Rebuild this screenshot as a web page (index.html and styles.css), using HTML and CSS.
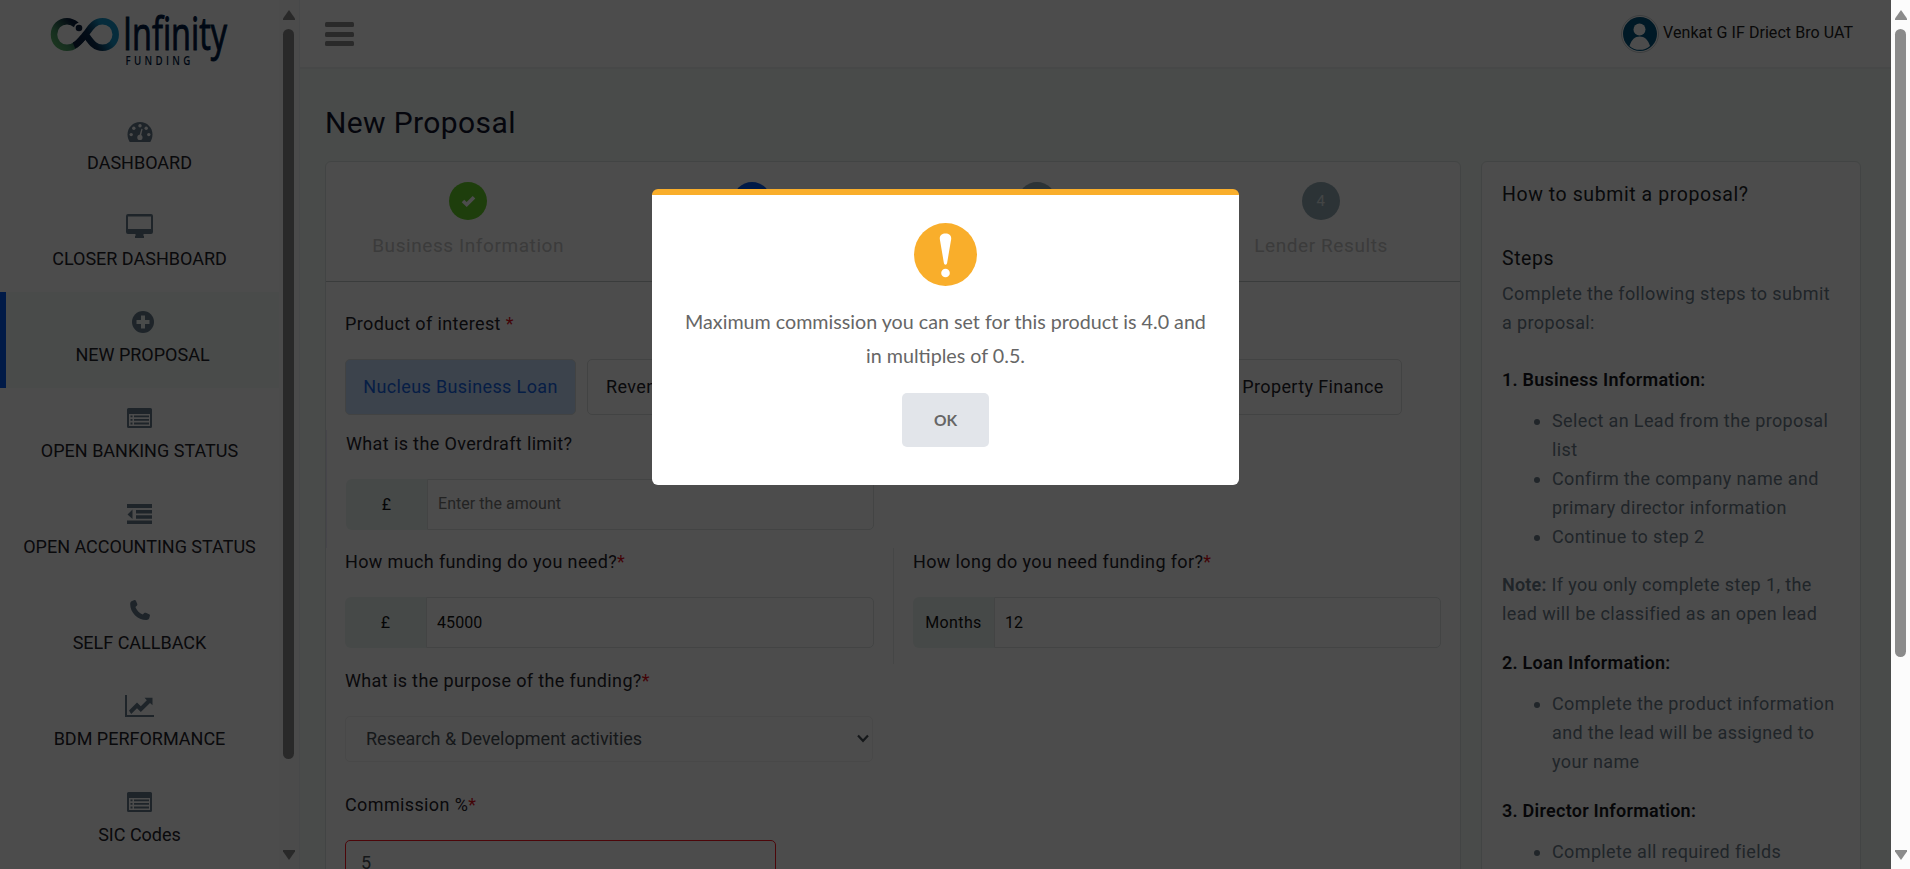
FILE: index.html
```html
<!DOCTYPE html>
<html lang="en">
<head>
<meta charset="utf-8">
<title>New Proposal</title>
<link rel="stylesheet" href="styles.css">
</head>
<body>
<div class="app">
  <aside class="sidebar">
    <div class="sidebar-body">
      <svg class="logo" width="200" height="68" viewBox="0 0 200 68">
        <defs>
          <linearGradient id="lg" gradientUnits="userSpaceOnUse" x1="52" y1="46" x2="78" y2="24"><stop offset="0" stop-color="#5fb96b"/><stop offset=".35" stop-color="#4a9a68"/><stop offset=".9" stop-color="#0b1f3f"/></linearGradient>
          <linearGradient id="lb" gradientUnits="userSpaceOnUse" x1="82" y1="46" x2="112" y2="28"><stop offset="0" stop-color="#0b1f3f"/><stop offset=".35" stop-color="#0d2d50"/><stop offset=".8" stop-color="#1595c8"/></linearGradient>
        </defs>
        <path d="M76.500 25C73.500 22.500 70.500 21.200 67 21.200C59.500 21.200 54 27 54 34.500S59.500 47.800 67 47.800C74 47.800 78 43.500 83 37.500" fill="none" stroke="url(#lg)" stroke-width="6.500"/>
        <path d="M74 45.500C79 43.500 82 38.500 87 32.500C91.500 26 95 21.200 102.500 21.200C110 21.200 115.700 27 115.700 34.500S110 47.800 102.500 47.800C95.500 47.800 92 43.500 87 36.500" fill="none" stroke="url(#lb)" stroke-width="6.500"/>
        <circle cx="79" cy="28" r="5" fill="#fff"/>
        <circle cx="79" cy="28" r="3.300" fill="#0b1f3f"/>
        <text class="logo-name" x="123" y="49.500" textLength="104" lengthAdjust="spacingAndGlyphs">Infinity</text>
        <text class="logo-sub" transform="translate(125.500 64.500) scale(.78 1)" x="0" y="0" textLength="83" lengthAdjust="spacing">FUNDING</text>
      </svg>
      <nav class="menu">
        <a class="item"><svg class="ic gauge" width="26" height="20" viewBox="0 0 26 20"><path d="M13 0C6 0 .5 5.500.5 12.500c0 2.800.9 5.200 2.200 7.500h20.600c1.300-2.300 2.200-4.700 2.200-7.500C25.500 5.500 20 0 13 0z"/><g fill="#fff"><circle cx="13" cy="3.700" r="1.700"/><circle cx="6.800" cy="6.300" r="1.700"/><circle cx="19.200" cy="6.300" r="1.700"/><circle cx="4.200" cy="12.600" r="1.700"/><circle cx="21.800" cy="12.600" r="1.700"/><circle cx="12.900" cy="15.400" r="2.600"/><path d="M12.300 14 14.400 6.800 15.600 7.100 13.900 14.300z"/></g></svg><span>DASHBOARD</span></a>
        <a class="item"><svg class="ic" width="27" height="24" viewBox="0 0 27 24"><path fill-rule="evenodd" d="M2 0h23a2 2 0 0 1 2 2v16a2 2 0 0 1-2 2h-7.500v2H18v2H9v-2h.5v-2H2a2 2 0 0 1-2-2V2a2 2 0 0 1 2-2zM2 2.500V15h23V2.500z"/></svg><span>CLOSER DASHBOARD</span></a>
        <a class="item active"><svg class="ic" width="22" height="22" viewBox="0 0 22 22"><circle cx="11" cy="11" r="11"/><path fill="#f4faf7" d="M9 4.500h4V9h4.500v4H13v4.500H9V13H4.500V9H9z"/></svg><span>NEW PROPOSAL</span></a>
        <a class="item"><svg class="ic" width="25" height="20" viewBox="0 0 25 20"><path fill-rule="evenodd" d="M1.500 0h22A1.500 1.500 0 0 1 25 1.500v17a1.500 1.500 0 0 1-1.500 1.500h-22A1.500 1.500 0 0 1 0 18.500v-17A1.500 1.500 0 0 1 1.500 0zM2 6v12h21V6z"/><path d="M3.500 7.500h2v1.800h-2zM7 7.500h15v1.800H7zM3.500 11h2v1.800h-2zM7 11h15v1.800H7zM3.500 14.600h2v1.800h-2zM7 14.600h15v1.800H7z"/></svg><span>OPEN BANKING STATUS</span></a>
        <a class="item"><svg class="ic" width="25" height="20" viewBox="0 0 25 20"><path d="M0 0h25v4H0zM9 6h16v3.500H9zM9 11.300h16v3.500H9zM0 16.500h25V20H0zM.5 10.400 5.500 5.600v9.500z"/></svg><span>OPEN ACCOUNTING STATUS</span></a>
        <a class="item"><svg class="ic" width="20" height="20" viewBox="0 0 20 20"><path d="M2 1 4.500 0C5.300-.1 5.700.3 6 1L7.300 4c.2.700 0 1.200-.5 1.700L5.400 7c1.200 3.300 3.800 6 7.400 7.500l1.400-1.400c.5-.5 1-.6 1.700-.3l3.200 1.400c.7.300 1 .8.800 1.500l-.6 2.300c-.3 1.200-1.400 2-2.900 2C7.500 19.800.2 12.500.2 4.200.1 2.700.7 1.500 2 1z"/></svg><span>SELF CALLBACK</span></a>
        <a class="item"><svg class="ic" width="29" height="22" viewBox="0 0 29 22"><path d="M0 0h2v20h27v2H0zM4 15.500 12 7.500l3.800 3.800 6-6-2.300-2.500H27.500v7.400l-2.500-2.300-9.200 9.200L12 13.300 6.200 19z"/></svg><span>BDM PERFORMANCE</span></a>
        <a class="item"><svg class="ic" width="25" height="20" viewBox="0 0 25 20"><path fill-rule="evenodd" d="M1.500 0h22A1.500 1.500 0 0 1 25 1.500v17a1.500 1.500 0 0 1-1.500 1.500h-22A1.500 1.500 0 0 1 0 18.500v-17A1.500 1.500 0 0 1 1.500 0zM2 6v12h21V6z"/><path d="M3.500 7.500h2v1.800h-2zM7 7.500h15v1.800H7zM3.500 11h2v1.800h-2zM7 11h15v1.800H7zM3.500 14.600h2v1.800h-2zM7 14.600h15v1.800H7z"/></svg><span>SIC Codes</span></a>
      </nav>
    </div>
    <div class="scroll side-scroll">
      <svg class="arrow" width="12" height="10" viewBox="0 0 12 10"><path d="M6 0 12 8.500V10H0V8.500z"/></svg>
      <div class="thumb side-thumb"></div>
      <svg class="arrow last" width="12" height="10" viewBox="0 0 12 10"><path d="M6 10 12 1.500V0H0V1.500z"/></svg>
    </div>
  </aside>

  <div class="page">
    <header class="topbar">
      <div class="burger"><i></i><i></i><i></i></div>
      <div class="user">
        <svg width="38" height="38" viewBox="0 0 38 38"><circle cx="19" cy="19" r="18.500" fill="#fff" stroke="#c9cfd2"/><circle cx="19" cy="19" r="17" fill="#00557f"/><circle cx="18.500" cy="14.500" r="6" fill="#fff"/><path d="M8.500 31C10.500 24.500 14 21.500 18.700 21.500S27 24.500 29 31C26 34 22.500 34.800 18.700 34.800S11.500 34 8.500 31z" fill="#fff"/></svg>
        <span>Venkat G IF Driect Bro UAT</span>
      </div>
    </header>
    <h1 class="title">New Proposal</h1>
    <div class="columns">
      <section class="card main-card">
        <div class="steps">
          <div class="step"><b class="dot done"><svg width="15" height="12" viewBox="0 0 15 12"><path d="M2 6 5.700 9.500 13 2.200" fill="none" stroke="#fff" stroke-width="3.600"/></svg></b><span>Business Information</span></div>
          <div class="step"><b class="dot now">2</b><span>Loan Information</span></div>
          <div class="step"><b class="dot">3</b><span>Director Information</span></div>
          <div class="step"><b class="dot">4</b><span>Lender Results</span></div>
        </div>
        <div class="form">
          <div class="field f-product">
            <label>Product of interest <em>*</em></label>
            <div class="products">
              <button class="prod on">Nucleus Business Loan</button>
              <button class="prod revenue">Revenue Based Loan</button>
              <button class="prod property">Property Finance</button>
            </div>
          </div>
          <div class="field f-overdraft">
            <label>What is the Overdraft limit?</label>
            <div class="group"><span class="addon">£</span><span class="input hint">Enter the amount</span></div>
          </div>
          <div class="pair">
            <div class="field">
              <label>How much funding do you need?<em>*</em></label>
              <div class="group"><span class="addon">£</span><span class="input">45000</span></div>
            </div>
            <div class="field right">
              <label>How long do you need funding for?<em>*</em></label>
              <div class="group"><span class="addon">Months</span><span class="input">12</span></div>
            </div>
          </div>
          <div class="field f-purpose">
            <label>What is the purpose of the funding?<em>*</em></label>
            <div class="select"><span>Research &amp; Development activities</span><svg width="12" height="9" viewBox="0 0 12 9"><path d="M1 1.500 6 6.800 11 1.500" fill="none" stroke="#495057" stroke-width="2.200"/></svg></div>
          </div>
          <div class="field">
            <label>Commission %<em>*</em></label>
            <div class="commission">5</div>
          </div>
        </div>
      </section>
      <section class="card help">
        <h2>How to submit a proposal?</h2>
        <h2 class="sub">Steps</h2>
        <p>Complete the following steps to submit a proposal:</p>
        <h3>1. Business Information:</h3>
        <ul><li>Select an Lead from the proposal list</li><li>Confirm the company name and primary director information</li><li>Continue to step 2</li></ul>
        <p class="note"><strong>Note:</strong> If you only complete step 1, the lead will be classified as an open lead</p>
        <h3>2. Loan Information:</h3>
        <ul><li>Complete the product information and the lead will be assigned to your name</li></ul>
        <h3>3. Director Information:</h3>
        <ul><li>Complete all required fields</li></ul>
      </section>
    </div>
  </div>

  <div class="scroll window-scroll">
    <svg class="arrow" width="12" height="10" viewBox="0 0 12 10"><path d="M6 0 12 8.500V10H0V8.500z"/></svg>
    <div class="thumb window-thumb"></div>
    <svg class="arrow last" width="12" height="10" viewBox="0 0 12 10"><path d="M6 10 12 1.500V0H0V1.500z"/></svg>
  </div>
</div>

<div class="overlay">
  <div class="modal">
    <svg width="63" height="63" viewBox="0 0 63 63"><circle cx="31.500" cy="31.500" r="31.500" fill="#f9ae2b"/><path fill="#fff" d="M31.500 10.500c3.600 0 6 1.800 5.700 5.500L33.200 39.500c-.4 3-3 3-3.400 0L25.800 16c-.3-3.700 2.100-5.500 5.700-5.500z"/><circle cx="31.500" cy="50" r="4.300" fill="#fff"/></svg>
    <p>Maximum commission you can set for this product is 4.0 and in multiples of 0.5.</p>
    <button class="ok">OK</button>
  </div>
</div>
</body>
</html>
```
FILE: styles.css
```css
* { box-sizing: border-box; }
body { margin: 0; height: 869px; overflow: hidden; font-family: Roboto, "Liberation Sans", sans-serif; color: #1f2229; background: #f4faf7; }
h1, h2, h3, p, ul { margin: 0; padding: 0; font-weight: 400; }
button { font: inherit; letter-spacing: inherit; color: inherit; }
em { font-style: normal; color: #e0101c; }

.app { display: flex; height: 869px; }

/* Sidebar */
.sidebar { display: flex; width: 300px; flex: none; background: #fff; border-right: 1px solid #eef1f3; overflow: hidden; }
.sidebar-body { width: 279px; }
.logo { display: block; overflow: visible; }
.logo-name { font: 500 45px "Open Sans", sans-serif; fill: #001b44; stroke: #001b44; stroke-width: 1; font-variant-ligatures: none; }
.logo-sub { font: 600 12.500px "Open Sans", sans-serif; fill: #001b44; }
.menu { padding-top: 32px; }
.item { display: flex; flex-direction: column; align-items: center; height: 96px; padding-top: 20px; font-size: 18px; line-height: 26px; white-space: nowrap; }
.item.active { border-left: 6px solid #0058ee; background: #f4faf7; }
.item .ic { display: block; height: 24px; margin: -2px 0 8px; flex: none; overflow: visible; fill: #64798a; }
.item .gauge { margin: 0 0 6px; }

/* Scrollbars */
.scroll { display: flex; flex-direction: column; align-items: center; width: 20px; flex: none; height: 869px; padding: 10px 0 9px; background: #fafafa; }
.arrow { flex: none; fill: #8b8b8b; }
.arrow.last { margin-top: auto; }
.thumb { width: 11px; margin-top: 9px; border-radius: 6px; background: #8b8b8b; }
.side-scroll { padding-right: 1px; }
.side-thumb { height: 730px; }
.window-thumb { height: 628px; }
.window-scroll { width: 19px; background: #fcfcfc; }

/* Page */
.page { flex: 1; min-width: 0; overflow: hidden; }
.topbar { display: flex; justify-content: space-between; align-items: flex-start; height: 69px; padding: 15px 38px 0 25px; background: #fff; border-bottom: 2px solid #edf1f1; }
.burger { display: flex; flex-direction: column; gap: 4.500px; padding-top: 7px; }
.burger i { width: 29px; height: 5px; border-radius: 1.500px; background: #8c8c8c; }
.user { display: flex; gap: 4px; font-size: 16px; line-height: 35px; letter-spacing: .05px; color: #222; }
.title { margin: 33px 0 0 25px; height: 59px; font-size: 30px; line-height: 42px; letter-spacing: .38px; color: #11142d; }
.columns { display: flex; gap: 20px; padding-left: 25px; }
.card { height: 760px; background: #fff; border: 1px solid #dde4e3; border-radius: 6px; }
.main-card { width: 1136px; flex: none; }
.help { width: 380px; padding: 18px 20px 0 20px; font-size: 18px; line-height: 29px; letter-spacing: .37px; color: #6d7c8a; }

/* Steps */
.steps { display: flex; height: 120px; border-bottom: 1px solid #c4c8c8; }
.step { display: flex; flex: none; width: 284.300px; flex-direction: column; align-items: center; padding-top: 20px; gap: 12px; font-size: 19px; line-height: 28px; letter-spacing: .58px; color: #c6c6c6; }
.dot { display: flex; align-items: center; justify-content: center; width: 38px; height: 38px; border-radius: 50%; background: #95abb4; color: #dfe6e8; font-size: 15px; font-weight: 400; }
.dot.done { background: #67cf2b; }
.dot.now { background: #0058ee; color: #fff; }

/* Form */
.form { padding-top: 28px; font-size: 18px; letter-spacing: .37px; }
.field { padding: 0 19px; }
.field label { display: block; height: 49px; padding-top: 1px; line-height: 26px; }
.f-product { height: 120px; }
.products { display: flex; }
.prod { height: 56px; border: 1px solid #dce0e0; border-radius: 5px; background: #fff; padding: 0 0 2px; white-space: nowrap; }
.prod.on { width: 231px; background: #c8e0ff; color: #1765e8; }
.prod.revenue { width: 240px; margin-left: 11px; padding-left: 18px; text-align: left; }
.prod.property { width: 178px; margin-left: auto; margin-right: 39px; }
.f-overdraft { width: 567px; height: 118px; border-left: 1px solid #e9e8f7; }
.pair { display: flex; height: 119px; }
.pair .field { width: 567px; height: 116px; }
.pair .right { border-left: 1px solid #e6e9e9; }
.group { display: flex; height: 51px; font-size: 16px; }
.addon { display: flex; align-items: center; justify-content: center; width: 81px; flex: none; border-radius: 6px 0 0 6px; background: #ecf3f1; color: #111; }
.input { display: flex; align-items: center; flex: 1; padding-left: 10px; border: 1px solid #dfe3e3; border-radius: 0 5px 5px 0; color: #111; letter-spacing: .1px; }
.input.hint { padding-bottom: 2px; color: #777; letter-spacing: .05px; }
.f-purpose { height: 124px; }
.select { display: flex; align-items: center; justify-content: space-between; width: 528px; height: 46px; padding: 0 3px 2px 20px; border: 1px solid #f0f0f0; border-radius: 5px; color: #495057; letter-spacing: 0; }
.commission { width: 431px; height: 46px; padding-left: 15px; border: 1px solid #ff1420; border-radius: 5px; color: #495057; line-height: 43px; }

/* Help */
.help h2 { font-size: 19.500px; line-height: 30px; color: #1c1e26; letter-spacing: .58px; }
.help .sub { margin-top: 34px; margin-bottom: 5px; }
.help h3 { margin-top: 28px; margin-bottom: 12px; font-size: 18px; line-height: 29px; font-weight: 600; color: #15171c; letter-spacing: .25px; }
.help strong { letter-spacing: .2px; font-weight: 600; }
.help ul { padding-left: 50px; }
.help li { margin-right: -5px; }
.help ul + h3 { margin-top: 20px; }
.help .note { margin-top: 19px; }
.help .note + h3 { margin-top: 20px; }

/* Dialog */
.overlay { position: absolute; left: 0; top: 0; width: 1891px; height: 869px; background: rgba(0, 0, 0, .7); }
.modal { display: flex; flex-direction: column; align-items: center; width: 587px; height: 296px; margin: 189px auto 0; padding: 28px 30px 0; border-top: 6px solid #f9ae2b; border-radius: 6px; background: #fff; text-align: center; }
.modal p { margin-top: 19px; font: 19.700px/34px Lato, sans-serif; color: #666; }
.ok { width: 87px; height: 54px; margin-top: 20px; border: 0; border-radius: 5px; background: #e2e5ea; color: #666; font: 700 15.500px Lato, sans-serif; }
```
